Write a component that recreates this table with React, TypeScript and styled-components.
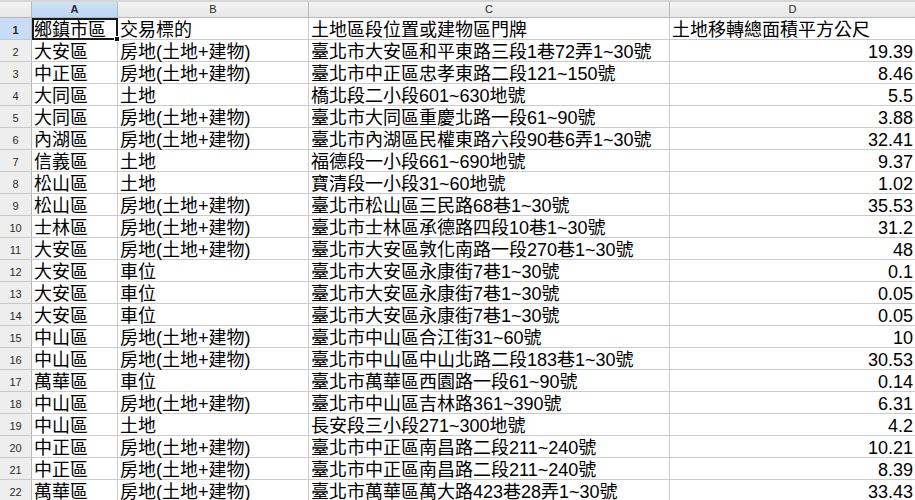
import React from "react";
import styled, { createGlobalStyle, css } from "styled-components";

const Global = createGlobalStyle`
  html, body { margin: 0; padding: 0; background: #ffffff; overflow: hidden; }
  body { font-family: "Liberation Sans", "Noto Sans CJK TC", sans-serif; }
`;

const Sheet = styled.div`
  width: 915px;
  height: 500px;
  overflow: hidden;
  display: flex;
  flex-direction: column;
  background: #ffffff;
`;

const TopStrip = styled.div`
  height: 2px;
  background: #d6d6d6;
  flex: none;
`;

const Grid = styled.div`
  display: grid;
  grid-template-columns: 32px 86px 191px 361px 246px;
  grid-auto-rows: 22px;
  grid-template-rows: 16px;
`;

const HeadCell = styled.div<{ $sel?: boolean }>`
  box-sizing: border-box;
  border-right: 1px solid #b9b9b9;
  border-bottom: 1px solid #b9b9b9;
  background: linear-gradient(#f3f3f3, #e7e7e7);
  font-family: "Liberation Sans", Arial, sans-serif;
  font-size: 11px;
  color: #2a2a2a;
  display: flex;
  align-items: center;
  justify-content: center;
  line-height: 1;
  ${(p) =>
    p.$sel &&
    css`
      background: linear-gradient(#cfe2f7, #bcd6f3);
      font-weight: bold;
    `}
`;

const RowHead = styled.div<{ $sel?: boolean }>`
  box-sizing: border-box;
  border-right: 1px solid #b9b9b9;
  border-bottom: 1px solid #c9c9c9;
  background: #eeeeee;
  font-family: "Liberation Sans", Arial, sans-serif;
  font-size: 11px;
  color: #2a2a2a;
  display: flex;
  align-items: center;
  justify-content: center;
  padding-top: 3px;
  ${(p) =>
    p.$sel &&
    css`
      background: #c8ddf5;
      font-weight: bold;
    `}
`;

const Cell = styled.div<{ $num?: boolean; $active?: boolean }>`
  position: relative;
  box-sizing: border-box;
  border-right: 1px solid #cbcbcb;
  border-bottom: 1px solid #cbcbcb;
  font-family: "Liberation Sans", "Noto Sans CJK TC", sans-serif;
  font-size: 18px;
  line-height: 17px;
  color: #000;
  white-space: nowrap;
  overflow: visible;
  padding: 0 2px 0 2px;
  display: flex;
  align-items: flex-end;
  justify-content: ${(p) => (p.$num ? "flex-end" : "flex-start")};
  ${(p) =>
    p.$active &&
    css`
      outline: 2px solid #1a1a1a;
      outline-offset: -2px;
      z-index: 2;
    `}
`;

const Handle = styled.span`
  position: absolute;
  right: -3px;
  bottom: -3px;
  width: 6px;
  height: 6px;
  background: #111;
  border: 1px solid #fff;
  box-sizing: border-box;
`;

type Row = [string, string, string, string];

const rows: Row[] = [
  ["鄉鎮市區", "交易標的", "土地區段位置或建物區門牌", "土地移轉總面積平方公尺"],
  ["大安區", "房地(土地+建物)", "臺北市大安區和平東路三段1巷72弄1~30號", "19.39"],
  ["中正區", "房地(土地+建物)", "臺北市中正區忠孝東路二段121~150號", "8.46"],
  ["大同區", "土地", "橋北段二小段601~630地號", "5.5"],
  ["大同區", "房地(土地+建物)", "臺北市大同區重慶北路一段61~90號", "3.88"],
  ["內湖區", "房地(土地+建物)", "臺北市內湖區民權東路六段90巷6弄1~30號", "32.41"],
  ["信義區", "土地", "福德段一小段661~690地號", "9.37"],
  ["松山區", "土地", "寶清段一小段31~60地號", "1.02"],
  ["松山區", "房地(土地+建物)", "臺北市松山區三民路68巷1~30號", "35.53"],
  ["士林區", "房地(土地+建物)", "臺北市士林區承德路四段10巷1~30號", "31.2"],
  ["大安區", "房地(土地+建物)", "臺北市大安區敦化南路一段270巷1~30號", "48"],
  ["大安區", "車位", "臺北市大安區永康街7巷1~30號", "0.1"],
  ["大安區", "車位", "臺北市大安區永康街7巷1~30號", "0.05"],
  ["大安區", "車位", "臺北市大安區永康街7巷1~30號", "0.05"],
  ["中山區", "房地(土地+建物)", "臺北市中山區合江街31~60號", "10"],
  ["中山區", "房地(土地+建物)", "臺北市中山區中山北路二段183巷1~30號", "30.53"],
  ["萬華區", "車位", "臺北市萬華區西園路一段61~90號", "0.14"],
  ["中山區", "房地(土地+建物)", "臺北市中山區吉林路361~390號", "6.31"],
  ["中山區", "土地", "長安段三小段271~300地號", "4.2"],
  ["中正區", "房地(土地+建物)", "臺北市中正區南昌路二段211~240號", "10.21"],
  ["中正區", "房地(土地+建物)", "臺北市中正區南昌路二段211~240號", "8.39"],
  ["萬華區", "房地(土地+建物)", "臺北市萬華區萬大路423巷28弄1~30號", "33.43"],
];

export default function App() {
  return (
    <>
      <Global />
      <Sheet>
        <TopStrip />
        <Grid>
          <HeadCell />
          <HeadCell $sel>A</HeadCell>
          <HeadCell>B</HeadCell>
          <HeadCell>C</HeadCell>
          <HeadCell>D</HeadCell>
          {rows.map((r, i) => (
            <React.Fragment key={i}>
              <RowHead $sel={i === 0}>{i + 1}</RowHead>
              <Cell $active={i === 0}>
                {r[0]}
                {i === 0 && <Handle />}
              </Cell>
              <Cell>{r[1]}</Cell>
              <Cell>{r[2]}</Cell>
              <Cell $num={i > 0}>{r[3]}</Cell>
            </React.Fragment>
          ))}
        </Grid>
      </Sheet>
    </>
  );
}
